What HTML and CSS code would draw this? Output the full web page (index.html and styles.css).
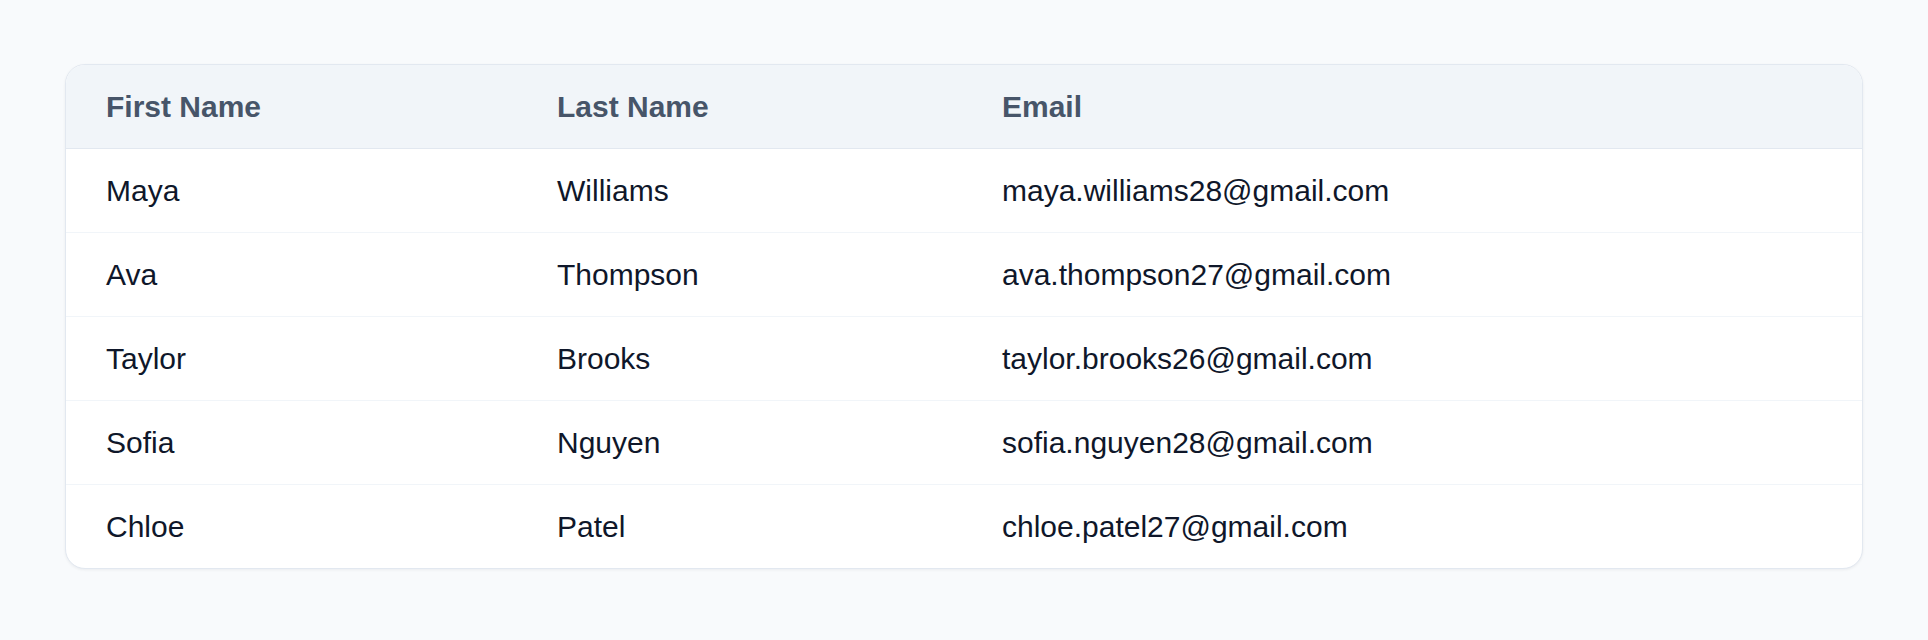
FILE: index.html
```html
<!DOCTYPE html>
<html lang="en">

<head>
    <meta charset="UTF-8">
    <meta name="viewport" content="width=device-width, initial-scale=1.0">
    <title>Contacts</title>
    <link rel="stylesheet" href="styles.css">
</head>

<body>
    <div class="table-card">
        <table class="contacts">
            <thead>
                <tr>
                    <th class="col-first">First Name</th>
                    <th class="col-last">Last Name</th>
                    <th>Email</th>
                </tr>
            </thead>
            <tbody>
                <tr>
                    <td>Maya</td>
                    <td>Williams</td>
                    <td>maya.williams28@gmail.com</td>
                </tr>
                <tr>
                    <td>Ava</td>
                    <td>Thompson</td>
                    <td>ava.thompson27@gmail.com</td>
                </tr>
                <tr>
                    <td>Taylor</td>
                    <td>Brooks</td>
                    <td>taylor.brooks26@gmail.com</td>
                </tr>
                <tr>
                    <td>Sofia</td>
                    <td>Nguyen</td>
                    <td>sofia.nguyen28@gmail.com</td>
                </tr>
                <tr>
                    <td>Chloe</td>
                    <td>Patel</td>
                    <td>chloe.patel27@gmail.com</td>
                </tr>
            </tbody>
        </table>
    </div>
</body>
</html>
```

FILE: styles.css
```css
body {
    font-family: "Liberation Sans", Arial, sans-serif;
    margin: 0;
    padding: 64px 65px;
    background-color: #f8fafc;
    color: #0f172a;
}

.table-card {
    background-color: #ffffff;
    border: 1px solid #e2e8f0;
    border-radius: 20px;
    overflow: hidden;
    box-shadow: 0 1px 3px rgba(15, 23, 42, 0.06);
}

.contacts {
    width: 100%;
    border-collapse: collapse;
    table-layout: fixed;
}

.contacts th,
.contacts td {
    box-sizing: border-box;
    padding: 20px 40px;
    line-height: 43px;
    font-size: 30px;
    text-align: left;
    white-space: nowrap;
}

.contacts th {
    background-color: #f1f5f9;
    color: #475569;
    font-weight: bold;
    border-bottom: 1px solid #e2e8f0;
}

.contacts .col-first {
    width: 451px;
}

.contacts .col-last {
    width: 445px;
}

.contacts td {
    color: #0f172a;
}

.contacts tbody tr {
    border-bottom: 1px solid #f1f5f9;
}

.contacts tbody tr:last-child {
    border-bottom: none;
}
```
